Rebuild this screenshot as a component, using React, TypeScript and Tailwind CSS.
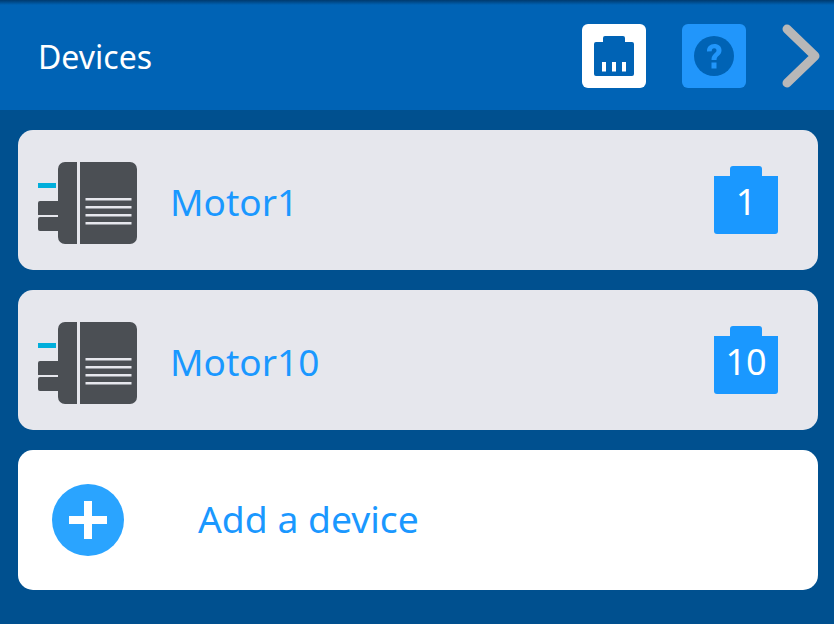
const fontFamily = "font-['Noto_Sans','Open_Sans',sans-serif]";

function NetworkIcon() {
  return (
    <svg width="64" height="64" viewBox="0 0 64 64">
      <rect width="64" height="64" rx="6" fill="#ffffff" />
      <path
        d="M21 18V14a2 2 0 0 1 2-2h18a2 2 0 0 1 2 2v4h7a2 2 0 0 1 2 2v30a2 2 0 0 1-2 2H14a2 2 0 0 1-2-2V20a2 2 0 0 1 2-2z"
        fill="#0063b5"
      />
      <rect x="20" y="38" width="4" height="9.500" fill="#ffffff" />
      <rect x="30" y="38" width="4" height="9.500" fill="#ffffff" />
      <rect x="40" y="38" width="4" height="9.500" fill="#ffffff" />
    </svg>
  );
}

function HelpIcon() {
  return (
    <svg width="64" height="64" viewBox="0 0 64 64">
      <rect width="64" height="64" rx="6" fill="#2196fb" />
      <circle cx="32" cy="32" r="20" fill="#0063b5" />
      <path
        d="M25 27.500c-.2-4.700 3-7.500 7.300-7.500 4.200 0 7.200 2.500 7.200 6.200 0 5.300-5 5.300-5 9.800h-5c0-6.500 5-6.500 5-9.500 0-1.300-.9-2.200-2.300-2.200-1.600 0-2.500 1.200-2.500 3z"
        fill="#2196fb"
      />
      <rect x="29.500" y="38.500" width="5" height="6" fill="#2196fb" />
    </svg>
  );
}

function ChevronIcon() {
  return (
    <svg width="38" height="64" viewBox="0 0 38 64">
      <path
        d="M5 5L33 32L5 59"
        fill="none"
        stroke="#b8b8b8"
        strokeWidth="9"
        strokeLinecap="round"
        strokeLinejoin="round"
      />
    </svg>
  );
}

function MotorIcon() {
  return (
    <svg className="mt-[6px]" width="99" height="82" viewBox="0 0 99 82">
      <rect x="0" y="21" width="18" height="5" fill="#00aedb" />
      <path
        d="M39 0v82H27a7 7 0 0 1-7-7v-6H2a2 2 0 0 1-2-2V57a2 2 0 0 1 2-2h18v-2H0V41a2 2 0 0 1 2-2h18V7a7 7 0 0 1 7-7z"
        fill="#4b4f54"
      />
      <path
        d="M42 0h50a7 7 0 0 1 7 7v68a7 7 0 0 1-7 7H42z"
        fill="#4b4f54"
      />
      <rect x="47.500" y="36" width="46" height="2.500" fill="#e6e7ed" />
      <rect x="47.500" y="44" width="46" height="2.500" fill="#e6e7ed" />
      <rect x="47.500" y="52" width="46" height="2.500" fill="#e6e7ed" />
      <rect x="47.500" y="60" width="46" height="2.500" fill="#e6e7ed" />
    </svg>
  );
}

function PortBadge({ value }: { value: string }) {
  return (
    <div className="flex w-16 flex-col items-center">
      <div className="h-[10px] w-8 rounded-t-[3px] bg-[#1a98ff]" />
      <div className="flex h-[58px] w-16 items-center justify-center rounded-[3px] rounded-t-none bg-[#1a98ff] pb-[6px] text-[36px] leading-none text-white">
        {value}
      </div>
    </div>
  );
}

function DeviceRow({ name, port }: { name: string; port: string }) {
  return (
    <div className="flex h-[140px] items-center rounded-[15px] bg-[#e6e7ed] pl-5 pr-10">
      <MotorIcon />
      <span className="ml-[33px] mt-[4px] flex-1 text-[37px] text-[#1a98ff]">{name}</span>
      <PortBadge value={port} />
    </div>
  );
}

export default function App() {
  return (
    <div className={`${fontFamily} flex h-[624px] w-[834px] flex-col overflow-hidden bg-[#00508f]`}>
      <header className="relative flex h-[110px] shrink-0 items-center bg-[#0063b5] pl-[38px] pr-[14px]">
        <div className="absolute inset-x-0 top-0 h-[5px] bg-gradient-to-b from-[#003a6e] to-transparent" />
        <h1 className="flex-1 pt-[3px] text-[32px] font-normal text-white">Devices</h1>
        <div className="mt-[2px] flex items-center gap-9">
          <NetworkIcon />
          <HelpIcon />
          <ChevronIcon />
        </div>
      </header>
      <main className="flex flex-col gap-5 pl-[18px] pr-4 pt-5">
        <DeviceRow name="Motor1" port="1" />
        <DeviceRow name="Motor10" port="10" />
        <div className="flex h-[140px] items-center rounded-[15px] bg-white pl-[34px]">
          <div className="relative h-[72px] w-[72px] rounded-full bg-[#2aa4ff]">
            <svg className="absolute inset-0" width="72" height="72" viewBox="0 0 72 72">
              <path d="M32 17h8v15h15v8H40v15h-8V40H17v-8h15z" fill="#ffffff" />
            </svg>
          </div>
          <span className="mb-[2px] ml-[74px] text-[37.300px] text-[#1a98ff]">Add a device</span>
        </div>
      </main>
    </div>
  );
}
